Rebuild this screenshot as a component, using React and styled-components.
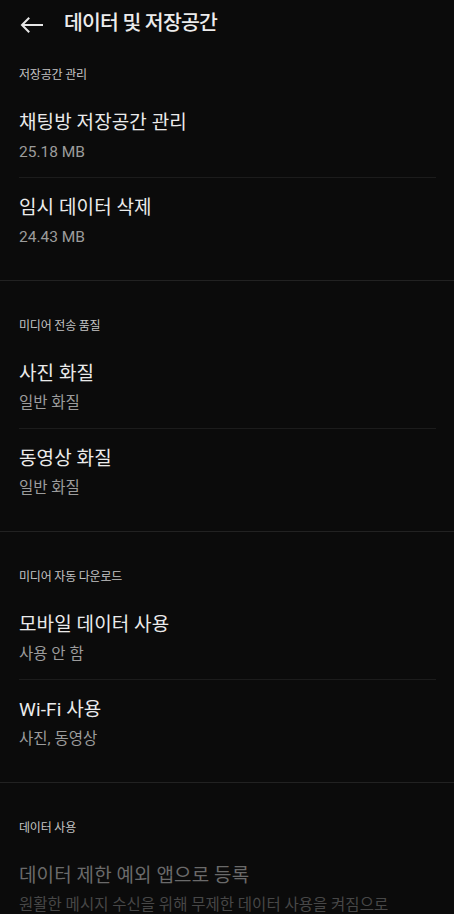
import React from "react";
import styled, { createGlobalStyle } from "styled-components";

const Global = createGlobalStyle`
  html, body { margin: 0; padding: 0; background: #0b0b0b; }
  body { font-family: Roboto, "Noto Sans CJK KR", sans-serif; -webkit-font-smoothing: antialiased; }
  * { box-sizing: border-box; }
`;

const Screen = styled.div`
  width: 454px;
  height: 914px;
  overflow: hidden;
  background: #0b0b0b;
  color: #e8e8e8;
`;

const Header = styled.header`
  height: 48px;
  display: flex;
  align-items: center;
  padding-left: 20px;
  gap: 21px;
`;

const BackButton = styled.button`
  width: 23px;
  height: 23px;
  padding: 0;
  border: 0;
  background: none;
  display: flex;
  align-items: center;
  justify-content: center;
  margin-top: 2px;
`;

const Title = styled.h1`
  margin: 0;
  font-size: 20.5px;
  font-weight: 500;
  letter-spacing: -0.8px;
  color: #ececec;
  line-height: 28px;
  margin-top: -2px;
`;

const Section = styled.section`
  border-top: ${(p) => (p.$first ? "none" : "1px solid #222222")};
  padding-bottom: 18px;
`;

const SectionLabel = styled.div`
  padding: ${(p) => (p.$first ? "18px" : "36px")} 19px 9px;
  font-size: 12px;
  line-height: 18px;
  color: #c4c4c4;
  letter-spacing: -0.2px;
`;

const Item = styled.div`
  margin: 0 18px 0 19px;
  padding: 16px 0 14px;
  border-bottom: ${(p) => (p.$last ? "none" : "1px solid #1c1c1c")};
  display: flex;
  flex-direction: column;
  gap: 4px;
`;

const ItemTitle = styled.div`
  font-size: 19px;
  line-height: 28px;
  letter-spacing: 0.1px;
  color: ${(p) => (p.$disabled ? "#6a6a6a" : "#ebebeb")};
  white-space: nowrap;
`;

const ItemSub = styled.div`
  font-size: 15.5px;
  line-height: 22px;
  color: ${(p) => (p.$disabled ? "#474747" : "#9c9c9c")};
  white-space: nowrap;
`;

const sections = [
  {
    label: "저장공간 관리",
    items: [
      ["채팅방 저장공간 관리", "25.18 MB"],
      ["임시 데이터 삭제", "24.43 MB"],
    ],
  },
  {
    label: "미디어 전송 품질",
    items: [
      ["사진 화질", "일반 화질"],
      ["동영상 화질", "일반 화질"],
    ],
  },
  {
    label: "미디어 자동 다운로드",
    items: [
      ["모바일 데이터 사용", "사용 안 함"],
      ["Wi-Fi 사용", "사진, 동영상"],
    ],
  },
  {
    label: "데이터 사용",
    items: [
      ["데이터 제한 예외 앱으로 등록", "원활한 메시지 수신을 위해 무제한 데이터 사용을 켜짐으로", true],
    ],
  },
];

export default function App() {
  return (
    <Screen>
      <Global />
      <Header>
        <BackButton aria-label="뒤로">
          <svg width="23" height="16" viewBox="0 0 23 16" fill="none">
            <path d="M22 8H2.5M8.5 1.5L2 8l6.5 6.5" stroke="#e6e6e6" strokeWidth="2" strokeLinecap="square" />
          </svg>
        </BackButton>
        <Title>데이터 및 저장공간</Title>
      </Header>
      {sections.map((s, si) => (
        <Section key={s.label} $first={si === 0}>
          <SectionLabel $first={si === 0}>{s.label}</SectionLabel>
          {s.items.map(([t, sub, dis], i) => (
            <Item key={t} $last={i === s.items.length - 1}>
              <ItemTitle $disabled={dis}>{t}</ItemTitle>
              <ItemSub $disabled={dis}>{sub}</ItemSub>
            </Item>
          ))}
        </Section>
      ))}
    </Screen>
  );
}
